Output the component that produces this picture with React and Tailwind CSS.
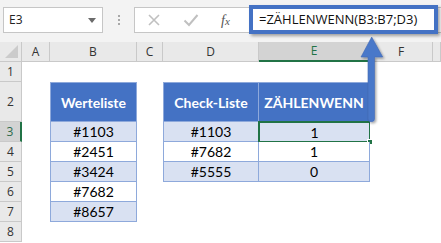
import React from 'react';

const cols = ['A', 'B', 'C', 'D', 'E', 'F', ''];
const rowHeights = [20, 40, 20, 20, 20, 20, 20, 20];

const liste = ['#1103', '#2451', '#3424', '#7682', '#8657'];
const check = [
  ['#1103', '1'],
  ['#7682', '1'],
  ['#5555', '0'],
];

function Cell({ className = '', children }) {
  return (
    <div className={`flex items-center justify-center text-[14px] text-black ${className}`}>
      {children}
    </div>
  );
}

export default function App() {
  const rows = [];
  rowHeights.forEach((h, i) => {
    const r = i + 1;
    const selRow = r === 3;
    rows.push(
      <div
        key={`rh${r}`}
        className={`flex items-center justify-center border-b border-r border-[#c9c9c9] text-[12px] ${
          selRow ? 'bg-[#d3d3d3] text-[#2f6b4c] border-r-2 border-r-[#217346]' : 'bg-[#e9e9e9] text-[#333]'
        }`}
        style={{ fontFamily: '"Open Sans", "Noto Sans", sans-serif' }}
      >
        {r}
      </div>
    );
    // A
    rows.push(<div key={`a${r}`} />);
    // B
    if (r === 2) {
      rows.push(
        <Cell key={`b${r}`} className="bg-[#4472c4] border border-[#8ea9db] font-bold text-[13px]">
          <span className="text-white">Werteliste</span>
        </Cell>
      );
    } else if (r >= 3 && r <= 7) {
      rows.push(
        <Cell
          key={`b${r}`}
          className={`border-x border-b border-[#8ea9db] ${r % 2 === 1 ? 'bg-[#d9e1f2]' : 'bg-white'}`}
        >
          {liste[r - 3]}
        </Cell>
      );
    } else rows.push(<div key={`b${r}`} />);
    // C
    rows.push(<div key={`c${r}`} />);
    // D, E
    if (r === 2) {
      rows.push(
        <Cell key={`d${r}`} className="bg-[#4472c4] border border-[#8ea9db] font-bold text-[13px]">
          <span className="text-white">Check-Liste</span>
        </Cell>
      );
      rows.push(
        <Cell key={`e${r}`} className="bg-[#4472c4] border-y border-r border-[#8ea9db] font-bold text-[13px]">
          <span className="text-white">ZÄHLENWENN</span>
        </Cell>
      );
    } else if (r >= 3 && r <= 5) {
      const bg = r % 2 === 1 ? 'bg-[#d9e1f2]' : 'bg-white';
      rows.push(
        <Cell key={`d${r}`} className={`border-x border-b border-[#8ea9db] ${bg}`}>
          {check[r - 3][0]}
        </Cell>
      );
      rows.push(
        <Cell
          key={`e${r}`}
          className={`relative border-r border-b border-[#8ea9db] ${bg} ${
            r === 3 ? 'border-2 border-[#217346] -ml-px -mt-px' : ''
          }`}
        >
          {check[r - 3][1]}
          {r === 3 && (
            <span className="absolute -bottom-[4px] -right-[4px] h-[6px] w-[6px] border border-white bg-[#217346]" />
          )}
        </Cell>
      );
    } else {
      rows.push(<div key={`d${r}`} />);
      rows.push(<div key={`e${r}`} />);
    }
    rows.push(<div key={`f${r}`} />);
    rows.push(<div key={`g${r}`} />);
  });

  return (
    <div
      className="relative h-[243px] w-[441px] overflow-hidden bg-white"
      style={{ fontFamily: 'Lato, "Open Sans", sans-serif' }}
    >
      {/* formula bar */}
      <div
        className="flex h-[42px] items-start bg-[#f3f3f3] pt-[7px]"
        style={{ fontFamily: '"Open Sans", "Noto Sans", sans-serif' }}
      >
        <div className="ml-[3px] flex h-[26px] w-[100px] items-center justify-between border border-[#c6c6c6] bg-white pl-[5px] pr-[6px] text-[12px] text-[#222]">
          <span>E3</span>
          <span className="h-0 w-0 border-x-[4px] border-t-[5px] border-x-transparent border-t-[#6b6b6b]" />
        </div>
        <div className="flex w-[31px] flex-col items-center gap-[2px] pt-[8px]">
          <span className="h-[2px] w-[2px] bg-[#a8a8a8]" />
          <span className="h-[2px] w-[2px] bg-[#a8a8a8]" />
          <span className="h-[2px] w-[2px] bg-[#a8a8a8]" />
        </div>
        <div className="flex h-[26px] flex-1 items-center border border-r-0 border-[#c6c6c6] bg-white">
          <svg width="14" height="14" viewBox="0 0 14 14" className="ml-[12px]">
            <path d="M2 2 L12 12 M12 2 L2 12" stroke="#c0c0c0" strokeWidth="1.6" />
          </svg>
          <svg width="16" height="14" viewBox="0 0 16 14" className="ml-[22px]">
            <path d="M1.5 7.5 L6 12 L14.5 2" stroke="#c0c0c0" strokeWidth="2" fill="none" />
          </svg>
          <span
            className="ml-[22px] text-[14px] italic text-[#555]"
            style={{ fontFamily: '"Liberation Serif", serif' }}
          >
            f<span className="text-[11px]">x</span>
          </span>
        </div>
      </div>

      {/* highlighted formula */}
      <div className="absolute left-[249px] top-[5px] flex h-[29px] w-[189px] items-center border-[4px] border-[#4472c4] bg-white pl-[6px] shadow-[2px_2px_3px_rgba(0,0,0,0.35)]">
        <span
          className="text-[13px] text-[#111]"
          style={{ fontFamily: '"Open Sans", "Noto Sans", sans-serif' }}
        >
          =ZÄHLENWENN(B3:B7;D3)
        </span>
      </div>

      {/* sheet */}
      <div className="grid grid-cols-[22px_28px_87px_26px_96px_111px_63px_1fr] grid-rows-[20px_20px_40px_20px_20px_20px_20px_20px_20px]">
        <div className="relative border-b border-r border-[#c9c9c9] bg-[#e9e9e9]">
          <span className="absolute bottom-[3px] right-[3px] h-0 w-0 border-b-[13px] border-l-[13px] border-l-transparent border-b-[#cbcbcb]" />
        </div>
        {cols.map((c) => (
          <div
            key={c || 'x'}
            className={`flex items-center justify-center border-r border-b border-[#c9c9c9] text-[12px] ${
              c === 'E' ? 'bg-[#d3d3d3] text-[#217346] border-b-2 border-b-[#217346]' : 'bg-[#e9e9e9] text-[#333]'
            }`}
            style={{ fontFamily: '"Open Sans", "Noto Sans", sans-serif' }}
          >
            {c}
          </div>
        ))}
        {rows}
      </div>

      {/* arrow */}
      <svg className="absolute left-[355px] top-[30px]" width="36" height="96" viewBox="355 30 36 96">
        <defs>
          <filter id="sh" x="-50%" y="-50%" width="200%" height="200%">
            <feDropShadow dx="1.5" dy="1.5" stdDeviation="1" floodColor="#000" floodOpacity="0.35" />
          </filter>
        </defs>
        <path
          d="M371.7 37 L382.7 57 L374.5 57 L374.5 119 Q374.5 121.7 371.2 121.7 Q368 121.7 368 119 L368 57 L361 57 Z"
          fill="#4a78c9"
          stroke="#3f68b3"
          strokeWidth="0.6"
          filter="url(#sh)"
        />
      </svg>
    </div>
  );
}
